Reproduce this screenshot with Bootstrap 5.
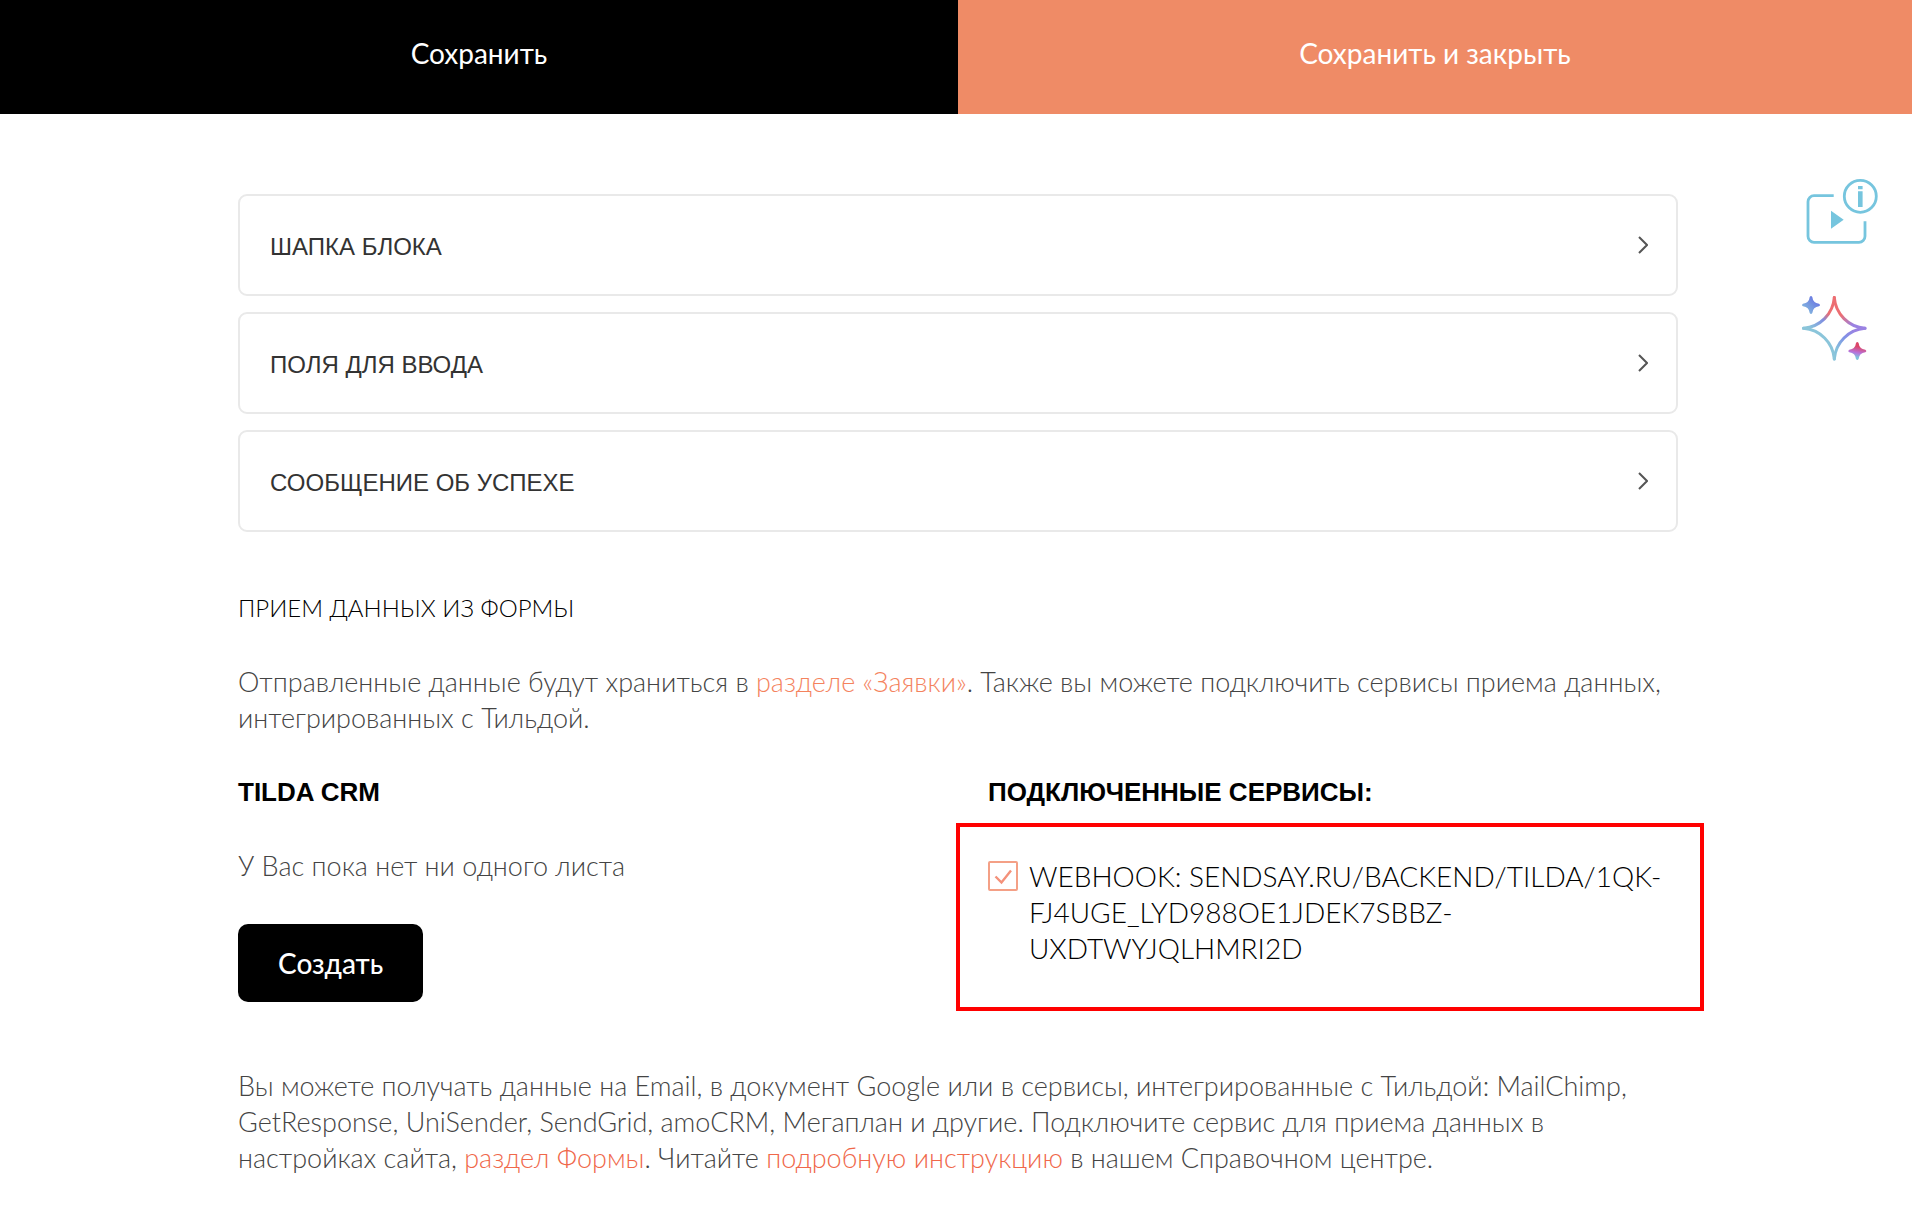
<!DOCTYPE html>
<html lang="ru">
<head>
<meta charset="utf-8">
<meta name="viewport" content="width=device-width, initial-scale=1">
<title>Настройки формы</title>
<link href="https://cdn.jsdelivr.net/npm/bootstrap@5.3.0/dist/css/bootstrap.min.css" rel="stylesheet">
<style>
  body { font-family: Lato, "Open Sans", sans-serif; font-size: 27px; font-weight: 300; line-height: 36px; color: #444; background: #fff; }
  .save-bar .btn { height: 114px; border: 0; font-size: 28px; padding-bottom: 14px; color: #fff; }
  .btn-save, .btn-save:hover { flex: 0 0 50.1%; background: #000; }
  .btn-save-close, .btn-save-close:hover { background: #ef8b66; }
  .settings { padding-top: 80px; margin-left: 238px; min-width: 0; }
  .side-tools { flex: 0 0 234px; padding: 62px 32px 0 0; gap: 48px; }
  .section-btn { height: 102px; padding: 0 28px 0 30px; border: 2px solid #e9e9e9; border-radius: 9px; background: #fff; color: #333; font-family: "Liberation Sans", Arial, sans-serif; font-size: 24px; line-height: 36px; }
  .section-btn span { padding-top: 4px; }
  .sections { gap: 16px; margin-bottom: 58px; }
  .form-title { font-size: 24px; font-weight: 300; line-height: 36px; color: #000; margin-bottom: 38px; }
  .intro { margin-bottom: 38px; }
  .sub-title { font-family: "Liberation Sans", Arial, sans-serif; font-size: 26px; font-weight: 700; line-height: 36px; color: #000; margin: 0; }
  .no-sheets { margin: 38px 0 40px; }
  .btn-create, .btn-create:hover { height: 78px; padding: 0 40px; border: 0; border-radius: 10px; background: #000; color: #fff; font-size: 28px; font-weight: 500; }
  .connected .sub-title { margin: 0 0 13px 30px; }
  .service-box { margin: 0 -26px 0 -2px; padding: 31px 28px 41px; border: 4px solid #f00; }
  .service-box label { font-size: 28px; color: #000; }
  .service-check { flex: none; width: 30px; height: 30px; margin: 3px 11px 0 0; border: 2px solid #f4a086; border-radius: 2px; appearance: none; background: #fff url("data:image/svg+xml,%3Csvg xmlns='http://www.w3.org/2000/svg' viewBox='0 0 26 26'%3E%3Cpath d='M5.5 13.5l6 6L21 7.5' fill='none' stroke='%23f4917a' stroke-width='2.4'/%3E%3C/svg%3E") center/26px no-repeat; }
  .outro { margin: 57px 0 45px; }
  .settings a { color: #f4835e; text-decoration: none; }
  .outro a { color: #f0684a !important; }
</style>
<script src="https://cdn.jsdelivr.net/npm/bootstrap@5.3.0/dist/js/bootstrap.bundle.min.js" defer></script>
</head>
<body>
<header class="save-bar d-flex">
  <button type="button" class="btn btn-save rounded-0">Сохранить</button>
  <button type="button" class="btn btn-save-close flex-fill rounded-0">Сохранить и закрыть</button>
</header>

<div class="d-flex">
  <main class="settings flex-grow-1">
    <div class="sections d-flex flex-column">
      <button type="button" class="section-btn d-flex align-items-center justify-content-between w-100"><span>ШАПКА БЛОКА</span>
        <svg width="10" height="18" viewBox="0 0 10 18" fill="none" stroke="#555" stroke-width="2" aria-hidden="true"><path d="M1 1l8 8-8 8"/></svg></button>
      <button type="button" class="section-btn d-flex align-items-center justify-content-between w-100"><span>ПОЛЯ ДЛЯ ВВОДА</span>
        <svg width="10" height="18" viewBox="0 0 10 18" fill="none" stroke="#555" stroke-width="2" aria-hidden="true"><path d="M1 1l8 8-8 8"/></svg></button>
      <button type="button" class="section-btn d-flex align-items-center justify-content-between w-100"><span>СООБЩЕНИЕ ОБ УСПЕХЕ</span>
        <svg width="10" height="18" viewBox="0 0 10 18" fill="none" stroke="#555" stroke-width="2" aria-hidden="true"><path d="M1 1l8 8-8 8"/></svg></button>
    </div>

    <h2 class="form-title">ПРИЕМ ДАННЫХ ИЗ ФОРМЫ</h2>
    <p class="intro">Отправленные данные будут храниться в <a href="#">разделе «Заявки»</a>. Также вы можете подключить сервисы приема данных, интегрированных с Тильдой.</p>

    <div class="row g-0">
      <section class="col-6">
        <h3 class="sub-title">TILDA CRM</h3>
        <p class="no-sheets">У Вас пока нет ни одного листа</p>
        <button type="button" class="btn btn-create">Создать</button>
      </section>
      <section class="col-6 connected">
        <h3 class="sub-title">ПОДКЛЮЧЕННЫЕ СЕРВИСЫ:</h3>
        <div class="service-box d-flex align-items-start">
          <input type="checkbox" class="service-check" id="webhook" checked>
          <label for="webhook">WEBHOOK: SENDSAY.RU/BACKEND/TILDA/1QK-FJ4UGE_LYD988OE1JDEK7SBBZ-UXDTWYJQLHMRI2D</label>
        </div>
      </section>
    </div>

    <p class="outro">Вы можете получать данные на Email, в документ Google или в сервисы, интегрированные с Тильдой: MailChimp, GetResponse, UniSender, SendGrid, amoCRM, Мегаплан и другие. Подключите сервис для приема данных в настройках сайта, <a href="#">раздел Формы</a>. Читайте <a href="#">подробную инструкцию</a> в нашем Справочном центре.</p>
  </main>

  <aside class="side-tools d-flex flex-column align-items-end">
    <a href="#" class="d-block lh-1" aria-label="Видеоинструкция">
      <svg class="d-block" width="80" height="70" viewBox="0 0 80 70" fill="none" stroke="#76c5de" stroke-width="2.8">
        <path d="M33.7 19.7H14a6 6 0 0 0-6 6v34.6a6 6 0 0 0 6 6h45a6 6 0 0 0 6-6V45.3"/>
        <circle cx="60.3" cy="20.3" r="16"/>
        <path d="M31 34.7l12.7 9L31 52.7zM58 15.3h4.6V31H58zM58 10h4.6v3.3H58z" fill="#76c5de" stroke="none"/>
      </svg>
    </a>
    <a href="#" class="d-block lh-1" aria-label="ИИ-помощник">
      <svg class="d-block" width="80" height="70" viewBox="0 0 80 70" fill="none" stroke-width="3" stroke-linecap="round">
        <defs>
          <linearGradient id="tl" gradientUnits="userSpaceOnUse" x1="34" y1="3" x2="3" y2="34"><stop offset=".35" stop-color="#ec6e72"/><stop offset=".55" stop-color="#7f8fe0"/><stop offset=".9" stop-color="#8bc5da"/></linearGradient>
          <linearGradient id="tr" gradientUnits="userSpaceOnUse" x1="34" y1="3" x2="65" y2="34"><stop offset=".4" stop-color="#ec6e72"/><stop offset=".75" stop-color="#9a82e2"/></linearGradient>
          <linearGradient id="br" gradientUnits="userSpaceOnUse" x1="65" y1="34" x2="34" y2="65"><stop offset=".2" stop-color="#9a82e2"/><stop offset=".5" stop-color="#7f93e6"/><stop offset=".8" stop-color="#86c2dc"/></linearGradient>
          <linearGradient id="s1" x1="1" y1="0" x2="0" y2="1"><stop offset=".2" stop-color="#6a78e2"/><stop offset=".9" stop-color="#86bede"/></linearGradient>
          <linearGradient id="s2" x1=".6" y1="0" x2=".4" y2="1"><stop offset=".25" stop-color="#dc4668"/><stop offset=".6" stop-color="#b774dc"/><stop offset=".85" stop-color="#7cc4dc"/></linearGradient>
        </defs>
        <path stroke="url(#tl)" d="M34.3 3.5C33 20 20 33 3.5 34.3"/>
        <path stroke="url(#tr)" d="M34.3 3.5C35.6 20 48.6 33 65 34.3"/>
        <path stroke="url(#br)" d="M65 34.3C48.6 35.6 35.6 48.6 34.3 65"/>
        <path stroke="#8bc5da" d="M3.5 34.3C20 35.6 33 48.6 34.3 65"/>
        <path fill="url(#s1)" d="M9.7 3Q11 1 12.3 3Q13 9 19 9.7Q21 11 19 12.3Q13 13 12.3 19Q11 21 9.7 19Q9 13 3 12.3Q1 11 3 9.7Q9 9 9.7 3z"/>
        <path fill="url(#s2)" transform="translate(46.3 46)" d="M9.7 3Q11 1 12.3 3Q13 9 19 9.7Q21 11 19 12.3Q13 13 12.3 19Q11 21 9.7 19Q9 13 3 12.3Q1 11 3 9.7Q9 9 9.7 3z"/>
      </svg>
    </a>
  </aside>
</div>
</body>
</html>
